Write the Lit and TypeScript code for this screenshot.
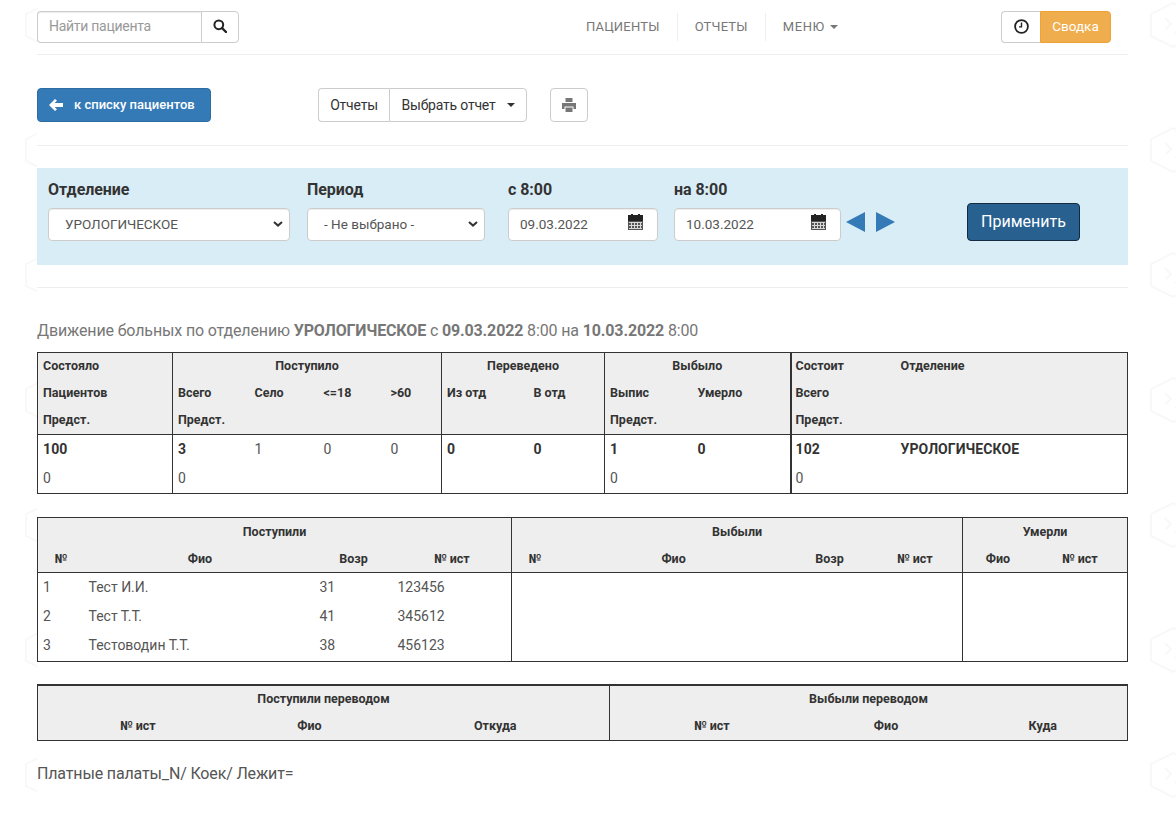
import { LitElement, html, css } from "lit";
import { customElement } from "lit/decorators.js";

const calendar = html`<svg class="cal" viewBox="0 0 15 16" width="15" height="16" aria-hidden="true">
  <path fill="#222" d="M3 0h2v1h5V0h2v1h3v6H0V1h3z"/>
  <path fill="#555" d="M0 7h15v9H0z"/>
  <path fill="#d8d8d8" d="M1 8h13v1H1zM1 11h13v1H1zM1 14h13v1H1zM3 8h1v7H3zM6 8h1v7H6zM9 8h1v7H9zM12 8h1v7h-1z"/>
</svg>`;

const chevron = html`<svg class="chev" viewBox="0 0 10 6" width="10" height="6" aria-hidden="true"><path d="M1 1l4 3.6L9 1" fill="none" stroke="#333" stroke-width="2"/></svg>`;

@customElement("app-root")
export class AppRoot extends LitElement {
  static styles = css`
    :host {
      display: block;
      position: relative;
      min-height: 828px;
      background: #fff;
      font-family: Roboto, "Noto Sans", sans-serif;
      font-size: 14px;
      line-height: 20px;
      color: #333;
      overflow: hidden;
    }
    * { box-sizing: border-box; }
    .marks { position: absolute; inset: 0; width: 100%; height: 100%; pointer-events: none; }
    .page { position: relative; width: 1091px; min-height: 828px; margin-left: 37px; padding-top: 11px; background: #fff; }
    hr { border: 0; border-top: 1px solid #eee; margin: 0; }

    .top { display: flex; align-items: flex-start; height: 43px; }
    .search { display: flex; width: 202px; height: 32px; }
    .search input {
      width: 164px; height: 32px; border: 1px solid #ccc; border-right: 0;
      border-radius: 4px 0 0 4px; padding: 0 11px 2px; font: inherit; color: #555; letter-spacing: -.28px;
      box-shadow: inset 0 1px 1px rgba(0,0,0,.075); outline: none;
    }
    .search input::placeholder { color: #999; opacity: 1; }
    .btn {
      display: flex; align-items: center; justify-content: center;
      background: #fff; border: 1px solid #ccc; color: #333; font: inherit; padding: 0;
    }
    .search .btn { width: 38px; height: 32px; border-radius: 0 4px 4px 0; }
    .search .btn svg { margin-top: -3px; }
    .nav { display: flex; margin-left: 330px; height: 28px; margin-top: 2px; font-size: 13px; color: #777; }
    .nav a { display: flex; align-items: center; padding: 0 17px; border-left: 1px solid #eee; letter-spacing: .2px; }
    .nav a:first-child { border-left: 0; }
    .caret { display: inline-block; width: 0; height: 0; border-top: 4px solid #777; border-left: 4px solid transparent; border-right: 4px solid transparent; margin-left: 5px; }
    .nav a.menu { padding-right: 0; letter-spacing: .6px; }
    .right-group { display: flex; margin-left: auto; margin-right: 17px; height: 32px; }
    .right-group .btn:first-child { width: 39px; border-right: 0; border-radius: 4px 0 0 4px; }
    .right-group .btn svg { margin-top: -2px; }
    .summary { width: 71px; background: #f0ad4e; color: #fff; border: 1px solid #eea236; border-radius: 0 4px 4px 0; display: flex; align-items: center; justify-content: center; font-size: 13.5px; padding-bottom: 2px; }

    .tools { display: flex; align-items: flex-start; height: 90px; padding-top: 33px; }
    .back {
      display: flex; align-items: center; gap: 11px; width: 174px; height: 34px; background: #337ab7; border: 1px solid #2e6da4;
      border-radius: 4px; color: #fff; font-size: 13px; font-weight: 500; padding-left: 11px;
    }
    .report { display: flex; height: 34px; margin-left: 107px; letter-spacing: -.2px; }
    .report .a { width: 71px; border-right: 0; border-radius: 4px 0 0 4px; }
    .report .b { width: 138px; border-radius: 0 4px 4px 0; gap: 11px; }
    .report .caret { border-top-color: #333; margin-left: 0; }
    .print { width: 38px; height: 34px; border-radius: 4px; margin-left: 23px; }

    .filter {
      display: flex; background: #d9edf7; height: 97px; margin-top: 22px; padding: 12px 0 0 11px;
    }
    .field { display: flex; flex-direction: column; }
    .field label { font-size: 16px; font-weight: 700; line-height: 20px; height: 28px; color: #333; letter-spacing: -.05px; }
    .f1 { width: 242px; margin-right: 17px; }
    .f2 { width: 178px; margin-right: 23px; }
    .f3 { width: 150px; margin-right: 16px; }
    .f4 { width: 167px; }
    .sel { position: relative; height: 33px; }
    .chev { position: absolute; right: 7px; top: 13px; pointer-events: none; }
    select, .date {
      height: 33px; width: 100%; border: 1px solid #ccc; border-radius: 4px; background: #fff;
      font: inherit; font-size: 13.5px; color: #555; box-shadow: inset 0 1px 1px rgba(0,0,0,.075);
    }
    select { appearance: none; -webkit-appearance: none; padding: 0 20px 2px 16px; outline: none; }
    .date { display: flex; align-items: center; padding: 0 14px 0 11px; }
    .date input { flex: 1; min-width: 0; width: 0; border: 0; padding: 0 0 2px; font: inherit; color: #555; background: transparent; outline: none; }
    .cal { margin-top: -6px; }
    .arrows { display: flex; gap: 11px; margin: 32px 0 0 5px; height: 20px; }
    .apply {
      width: 113px; height: 38px; margin: 23px 0 0 72px; background: #286090; color: #fff; border: 1px solid #122b40;
      border-radius: 4px; font: inherit; font-size: 16px; padding: 0;
    }
    .filter-rule { margin-top: 22px; }

    h4 { font-size: 16px; font-weight: 400; line-height: 20px; color: #777; margin: 33px 0 11px; letter-spacing: -.14px; }
    h4 b { font-weight: 700; }

    table { width: 1090px; border-collapse: collapse; table-layout: fixed; border: 1px solid #333; }
    th, td { padding: 0 5px; font-weight: 400; text-align: left; vertical-align: middle; }
    thead { background: #eee; border-bottom: 1px solid #333; }
    th { font-size: 12.5px; font-weight: 700; height: 27px; color: #333; }
    td { font-size: 14px; color: #555; }
    td.s { font-weight: 700; color: #333; letter-spacing: .1px; }
    .c { text-align: center; }
    .l { border-left: 1px solid #333; }
    .l2 { border-left: 2px solid #333; padding-left: 4px; }
    .shift-l { padding-right: 7px; }
    .shift-r { padding-left: 7px; }
    .t1 { margin-bottom: 23px; }
    .t1 thead tr:last-child th { height: 28px; }
    .t1 td { height: 28px; }
    .t1 tr + tr td { height: 31px; }
    .t2 thead tr:first-child th { height: 28px; }
    .t2 td { height: 29px; }
    .t2 tr:last-child td { height: 31px; padding-bottom: 2px; }
    .t2 { margin-bottom: 22px; }
    .t3 { border-top: 2px solid #333; }
    .t3 tr + tr th { height: 28px; }
    .note { font-size: 16px; font-weight: 400; color: #555; margin: 23px 0 0; line-height: 20px; letter-spacing: -.15px; }
  `;

  private triangle(d: string) {
    return html`<svg viewBox="0 0 19 20" width="19" height="20" aria-hidden="true"><path fill="#337ab7" d=${d}/></svg>`;
  }

  render() {
    return html`
      <svg class="marks" aria-hidden="true">
        <defs>
          <pattern id="tile" width="125" height="125" patternUnits="userSpaceOnUse">
            <g fill="none" stroke="#f8f8f8" stroke-width="2">
              <path d="M48 3l22 11v22L48 47 26 36V14z"/>
              <path d="M40 18l6 6-5 5M52 14l3 7 6-2M50 32l9 6"/>
              <path d="M111 71l22 11v22l-22 11-22-11V82z"/>
            </g>
          </pattern>
        </defs>
        <rect width="100%" height="100%" fill="url(#tile)"/>
      </svg>
      <div class="page">
        <div class="top">
          <div class="search">
            <input placeholder="Найти пациента" />
            <button class="btn">
              <svg viewBox="0 0 14 14" width="14" height="14" aria-hidden="true"><circle cx="5.8" cy="5.8" r="4.4" fill="none" stroke="#222" stroke-width="2"/><path d="M9 9l4 4" stroke="#222" stroke-width="2.4" stroke-linecap="round"/></svg>
            </button>
          </div>
          <nav class="nav">
            <a>ПАЦИЕНТЫ</a>
            <a>ОТЧЕТЫ</a>
            <a class="menu">МЕНЮ<span class="caret"></span></a>
          </nav>
          <div class="right-group">
            <button class="btn">
              <svg viewBox="0 0 15 15" width="15" height="15" aria-hidden="true"><circle cx="7.5" cy="7.5" r="6.4" fill="none" stroke="#222" stroke-width="1.8"/><path d="M7.5 3.6v4.3H5" fill="none" stroke="#222" stroke-width="1.4"/></svg>
            </button>
            <div class="summary">Сводка</div>
          </div>
        </div>
        <hr />
        <div class="tools">
          <div class="back">
            <svg viewBox="0 0 14 12" width="14" height="12" aria-hidden="true"><path fill="#fff" d="M0 6l6-6 2 1.8L5.6 4H14v4H5.6L8 10.2 6 12z"/></svg>
            <span>к списку пациентов</span>
          </div>
          <div class="report">
            <div class="btn a">Отчеты</div>
            <div class="btn b">Выбрать отчет <span class="caret"></span></div>
          </div>
          <div class="btn print">
            <svg viewBox="0 0 14 14" width="14" height="14" aria-hidden="true"><path fill="#777" d="M3.5 0h7v4h-7zM0 5h14v6h-2.5V8.5h-9V11H0z"/><path fill="#777" d="M3.5 9.5h7V14h-7z"/></svg>
          </div>
        </div>
        <hr />
        <div class="filter">
          <div class="field f1">
            <label>Отделение</label>
            <div class="sel"><select><option>УРОЛОГИЧЕСКОЕ</option></select>${chevron}</div>
          </div>
          <div class="field f2">
            <label>Период</label>
            <div class="sel"><select><option>- Не выбрано -</option></select>${chevron}</div>
          </div>
          <div class="field f3">
            <label>с 8:00</label>
            <div class="date"><input value="09.03.2022" />${calendar}</div>
          </div>
          <div class="field f4">
            <label>на 8:00</label>
            <div class="date"><input value="10.03.2022" />${calendar}</div>
          </div>
          <div class="arrows">
            ${this.triangle("M0 10L19 0v20z")}
            ${this.triangle("M0 0l19 10L0 20z")}
          </div>
          <button class="apply">Применить</button>
        </div>
        <hr class="filter-rule" />
        <h4>Движение больных по отделению <b>УРОЛОГИЧЕСКОЕ</b> с <b>09.03.2022</b> 8:00 на <b>10.03.2022</b> 8:00</h4>

        <table class="t1">
          <colgroup>
            ${[135, 77, 69, 67, 56, 87, 76, 88, 98, 105, 232].map((w) => html`<col style="width:${w}px" />`)}
          </colgroup>
          <thead>
            <tr>
              <th>Состояло</th>
              <th class="l c" colspan="4">Поступило</th>
              <th class="l c" colspan="2">Переведено</th>
              <th class="l c" colspan="2">Выбыло</th>
              <th class="l2">Состоит</th>
              <th>Отделение</th>
            </tr>
            <tr>
              <th>Пациентов</th>
              <th class="l">Всего</th><th>Село</th><th>&lt;=18</th><th>&gt;60</th>
              <th class="l">Из отд</th><th>В отд</th>
              <th class="l">Выпис</th><th>Умерло</th>
              <th class="l2">Всего</th><th></th>
            </tr>
            <tr>
              <th>Предст.</th>
              <th class="l" colspan="4">Предст.</th>
              <th class="l" colspan="2"></th>
              <th class="l" colspan="2">Предст.</th>
              <th class="l2">Предст.</th><th></th>
            </tr>
          </thead>
          <tbody>
            <tr>
              <td class="s">100</td>
              <td class="l s">3</td><td>1</td><td>0</td><td>0</td>
              <td class="l s">0</td><td class="s">0</td>
              <td class="l s">1</td><td class="s">0</td>
              <td class="l2 s">102</td><td class="s">УРОЛОГИЧЕСКОЕ</td>
            </tr>
            <tr>
              <td>0</td>
              <td class="l" colspan="4">0</td>
              <td class="l" colspan="2"></td>
              <td class="l" colspan="2">0</td>
              <td class="l2">0</td><td></td>
            </tr>
          </tbody>
        </table>

        <table class="t2">
          <colgroup>
            ${[46, 231, 78, 119, 46, 232, 80, 93, 72, 93].map((w) => html`<col style="width:${w}px" />`)}
          </colgroup>
          <thead>
            <tr>
              <th class="c" colspan="4">Поступили</th>
              <th class="l c" colspan="4">Выбыли</th>
              <th class="l c" colspan="2">Умерли</th>
            </tr>
            <tr>
              <th class="c">№</th><th class="c shift-r">Фио</th><th class="c">Возр</th><th class="c">№ ист</th>
              <th class="l c">№</th><th class="c">Фио</th><th class="c">Возр</th><th class="c shift-l">№ ист</th>
              <th class="l c shift-l">Фио</th><th class="c shift-l">№ ист</th>
            </tr>
          </thead>
          <tbody>
            ${[
              ["1", "Тест И.И.", "31", "123456"],
              ["2", "Тест Т.Т.", "41", "345612"],
              ["3", "Тестоводин Т.Т.", "38", "456123"],
            ].map(
              (r) => html`<tr>
                ${r.map((v) => html`<td>${v}</td>`)}
                <td class="l" colspan="4"></td>
                <td class="l" colspan="2"></td>
              </tr>`
            )}
          </tbody>
        </table>

        <table class="t3">
          <colgroup>
            ${[200, 144, 228, 204, 145, 169].map((w) => html`<col style="width:${w}px" />`)}
          </colgroup>
          <thead>
            <tr>
              <th class="c" colspan="3">Поступили переводом</th>
              <th class="l c" colspan="3">Выбыли переводом</th>
            </tr>
            <tr>
              <th class="c">№ ист</th><th class="c">Фио</th><th class="c">Откуда</th>
              <th class="l c">№ ист</th><th class="c">Фио</th><th class="c">Куда</th>
            </tr>
          </thead>
        </table>
        <p class="note">Платные палаты_N/ Коек/ Лежит=</p>
      </div>
    `;
  }
}
